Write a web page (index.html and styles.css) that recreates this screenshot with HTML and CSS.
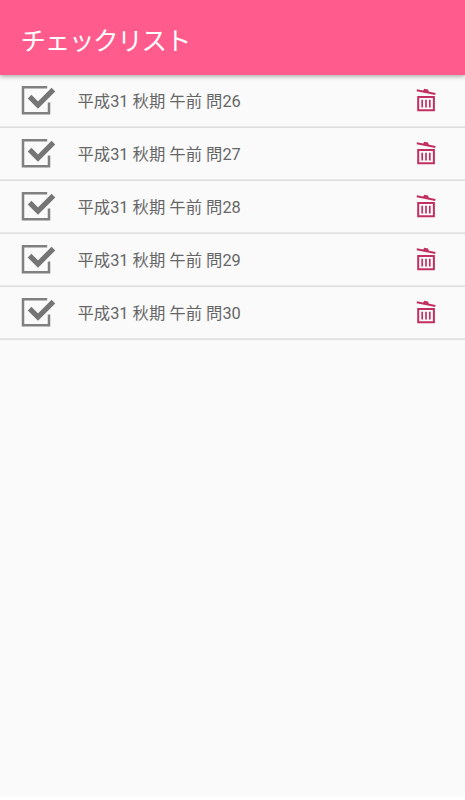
FILE: index.html
```html
<!DOCTYPE html>
<html lang="ja">
<head>
<meta charset="utf-8">
<title>チェックリスト</title>
<link rel="stylesheet" href="styles.css">
</head>
<body>
<svg class="defs" aria-hidden="true">
  <symbol id="check" viewBox="0 0 36 32">
    <path d="M26.2 3.2H2V29.3H28V18.5" fill="none" stroke="#808080" stroke-width="2.5"/>
    <path d="M8.6 12.6L17 21L32.4 5.6" fill="none" stroke="#757575" stroke-width="5.2"/>
  </symbol>
  <symbol id="trash" viewBox="0 0 20 24">
    <path d="M.8 2.2L19.4 6" fill="none" stroke="#c23062" stroke-width="1.9"/>
    <path d="M7 3L8.3 .8L12 1.5L13 4.3Z" fill="#c23062"/>
    <path d="M2.2 8.9H17.9V22.3H2.2Z" fill="none" stroke="#c23062" stroke-width="2"/>
    <path d="M6.2 11.8V19.4M10 11.8V19.4M13.8 11.8V19.4" fill="none" stroke="#c23062" stroke-width="1.7"/>
  </symbol>
</svg>
<div class="screen">
  <header class="bar"><h1>チェックリスト</h1></header>
  <ul class="list">
    <li><svg class="check"><use href="#check"/></svg><span>平成31 秋期 午前 問26</span><svg class="trash"><use href="#trash"/></svg></li>
    <li><svg class="check"><use href="#check"/></svg><span>平成31 秋期 午前 問27</span><svg class="trash"><use href="#trash"/></svg></li>
    <li><svg class="check"><use href="#check"/></svg><span>平成31 秋期 午前 問28</span><svg class="trash"><use href="#trash"/></svg></li>
    <li><svg class="check"><use href="#check"/></svg><span>平成31 秋期 午前 問29</span><svg class="trash"><use href="#trash"/></svg></li>
    <li><svg class="check"><use href="#check"/></svg><span>平成31 秋期 午前 問30</span><svg class="trash"><use href="#trash"/></svg></li>
  </ul>
</div>
</body>
</html>
```
FILE: styles.css
```css
* { box-sizing: border-box; }
body {
  margin: 0;
  background: #fff;
  font-family: Roboto, "Noto Sans CJK JP", sans-serif;
}
.defs { display: none; }
.screen {
  height: 797px;
  background: #fafafa;
}
.bar {
  position: relative;
  z-index: 1;
  display: flex;
  align-items: center;
  height: 75px;
  padding: 6px 20.5px 0;
  background: #ff5c8d;
  box-shadow: 0 1px 5px rgba(0, 0, 0, .38);
}
h1 {
  margin: 0;
  color: #fff;
  font-size: 25.5px;
  font-weight: 400;
  line-height: 36px;
  letter-spacing: -1.3px;
  white-space: nowrap;
}
.list {
  margin: 0;
  padding: 0;
  list-style: none;
}
.list li {
  display: flex;
  align-items: center;
  height: 53px;
  padding: 0 29px 1px 21px;
  border-bottom: 1px solid #dedede;
  box-shadow: inset 0 -1px #e9e9e9;
}
.list span {
  flex: 1;
  margin-left: 20.5px;
  padding-top: 2px;
  color: #666;
  font-size: 16.35px;
  line-height: 24px;
  white-space: nowrap;
}
.check { width: 36px; height: 32px; margin-bottom: 1px; }
.trash { width: 20px; height: 24px; margin-bottom: 1px; }
```
